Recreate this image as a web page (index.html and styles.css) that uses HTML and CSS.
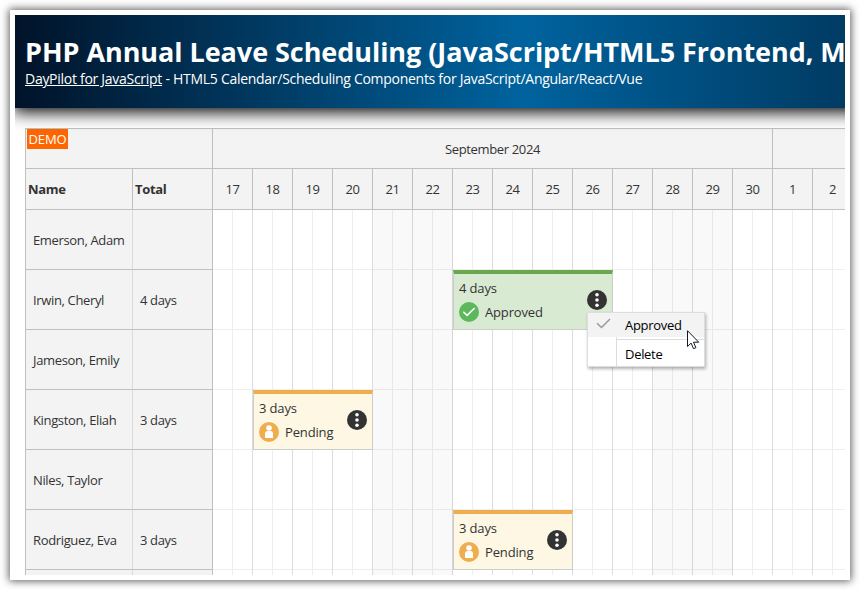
FILE: index.html
```html
<!DOCTYPE html>
<html lang="en">
  <head>
    <meta charset="UTF-8" />
    <meta name="viewport" content="width=device-width, initial-scale=1.0" />
    <title>PHP Annual Leave Scheduling</title>
    <link rel="stylesheet" href="styles.css">
  </head>
  <body>
    <div class="window">
      <div class="page">
        <header class="header">
          <h1>PHP Annual Leave Scheduling (JavaScript/HTML5 Frontend, M</h1>
          <div class="subtitle"><a href="#">DayPilot for JavaScript</a> - HTML5 Calendar/Scheduling Components for JavaScript/Angular/React/Vue</div>
        </header>

        <main class="scheduler">
          <div class="corner"><span class="demo">DEMO</span></div>
          <div class="months">
            <div class="month september">September 2024</div>
            <div class="month"></div>
          </div>
          <div class="columns"><div>Name</div><div>Total</div></div>
          <div class="days" id="days"></div>
          <div class="rows" id="rows"></div>
          <div class="grid">
            <div class="weekend first"></div>
            <div class="weekend second"></div>

            <div class="event approved">
              <div>4 days</div>
              <div class="status">
                <svg width="20" height="20" viewBox="0 0 20 20"><circle cx="10" cy="10" r="10" fill="#5cb85c" /><path d="M4.3 9.8l3.8 3.6 7.6-7.4" fill="none" stroke="#fff" stroke-width="1.5" /></svg>
                Approved
              </div>
              <svg class="dots" width="20" height="20" viewBox="0 0 20 20"><circle cx="10" cy="10" r="10" fill="#333" /><g fill="#fff"><circle cx="10" cy="4.7" r="1.8" /><circle cx="10" cy="10" r="1.8" /><circle cx="10" cy="15.3" r="1.8" /></g></svg>
            </div>

            <div class="event pending kingston">
              <div>3 days</div>
              <div class="status">
                <svg width="20" height="20" viewBox="0 0 20 20"><circle cx="10" cy="10" r="10" fill="#f0ad4e" /><circle cx="10" cy="6" r="2.8" fill="#fff" /><path d="M6 16v-4.5q0-2.5 2.5-2.5h3q2.5 0 2.5 2.5V16z" fill="#fff" /></svg>
                Pending
              </div>
              <svg class="dots" width="20" height="20" viewBox="0 0 20 20"><circle cx="10" cy="10" r="10" fill="#333" /><g fill="#fff"><circle cx="10" cy="4.7" r="1.8" /><circle cx="10" cy="10" r="1.8" /><circle cx="10" cy="15.3" r="1.8" /></g></svg>
            </div>

            <div class="event pending rodriguez">
              <div>3 days</div>
              <div class="status">
                <svg width="20" height="20" viewBox="0 0 20 20"><circle cx="10" cy="10" r="10" fill="#f0ad4e" /><circle cx="10" cy="6" r="2.8" fill="#fff" /><path d="M6 16v-4.5q0-2.5 2.5-2.5h3q2.5 0 2.5 2.5V16z" fill="#fff" /></svg>
                Pending
              </div>
              <svg class="dots" width="20" height="20" viewBox="0 0 20 20"><circle cx="10" cy="10" r="10" fill="#333" /><g fill="#fff"><circle cx="10" cy="4.7" r="1.8" /><circle cx="10" cy="10" r="1.8" /><circle cx="10" cy="15.3" r="1.8" /></g></svg>
            </div>

            <div class="menu">
              <div class="menu-item active">
                <svg width="15" height="12" viewBox="0 0 15 12"><path d="M1 5.2l4.5 4.3L14 1" fill="none" stroke="#999" stroke-width="1.5" /></svg>
                <span>Approved</span>
              </div>
              <div class="menu-line"></div>
              <div class="menu-item"><span>Delete</span></div>
            </div>
            <svg class="cursor" width="13" height="20" viewBox="0 0 13 20"><path d="M.5.7v15.8l3.6-3.4 2.4 5.6 2.4-1-2.4-5.5h5.2z" fill="#fff" stroke="#111827" /></svg>
          </div>
        </main>
      </div>
    </div>

    <script>
      const days = [17, 18, 19, 20, 21, 22, 23, 24, 25, 26, 27, 28, 29, 30, 1, 2];
      const people = [
        ["Emerson, Adam", ""],
        ["Irwin, Cheryl", "4 days"],
        ["Jameson, Emily", ""],
        ["Kingston, Eliah", "3 days"],
        ["Niles, Taylor", ""],
        ["Rodriguez, Eva", "3 days"],
        ["", ""],
      ];

      document.getElementById("days").innerHTML = days
        .map((day) => `<div>${day}</div>`)
        .join("");
      document.getElementById("rows").innerHTML = people
        .map(([name, total]) => `<div class="row"><div>${name}</div><div>${total}</div></div>`)
        .join("");
    </script>
  </body>
</html>
```
FILE: styles.css
```css
* {
  box-sizing: border-box;
}
body {
  margin: 0;
  padding: 10px;
  height: 590px;
  overflow: hidden;
  background: #fff;
  color: #333;
  font-family: "Segoe UI", "Open Sans", "Noto Sans", sans-serif;
  font-size: 13px;
  letter-spacing: -0.35px;
}
.window {
  width: 840px;
  height: 570px;
  padding: 5px;
  background: #fff;
  box-shadow: 0 0 8px 1px rgba(0, 0, 0, 0.65);
}
.page {
  height: 560px;
  overflow: hidden;
}
.header {
  position: relative;
  width: 1155px;
  height: 93px;
  padding: 18px 10px 0;
  color: #fff;
  background: linear-gradient(to right, #011329 0%, #00639e 44%, #011329 100%);
  box-shadow: 0 2px 16px 2px #000;
  white-space: nowrap;
}
.header h1 {
  margin: 0;
  font-size: 27px;
  line-height: 38px;
  letter-spacing: -0.05px;
}
.subtitle {
  font-size: 14px;
  line-height: 16px;
  letter-spacing: -0.28px;
}
.subtitle a {
  color: #fff;
}
.scheduler {
  display: grid;
  grid-template-columns: 188px 640px;
  grid-template-rows: 40px 41px 420px;
  width: 828px;
  margin: 20px 0 0 10px;
  border-top: 1px solid #c0c0c0;
}
.corner,
.columns,
.month,
.days div {
  background: #f3f3f3;
  border-right: 1px solid #c0c0c0;
  border-bottom: 1px solid #c0c0c0;
}
.corner,
.columns,
.rows {
  border-left: 1px solid #c0c0c0;
}
.corner {
  padding-left: 1px;
}
.demo {
  display: block;
  width: 41px;
  height: 20px;
  line-height: 20px;
  letter-spacing: -0.1px;
  text-align: center;
  color: #fff;
  background: #ff6600;
}
.months,
.days {
  display: flex;
}
.month {
  flex: 1;
  line-height: 41px;
  text-align: center;
}
.september {
  flex: 0 0 560px;
}
.columns {
  display: flex;
  font-weight: bold;
  line-height: 41px;
}
.columns div {
  flex: 1;
  padding-left: 2px;
}
.columns div:first-child {
  flex: 0 0 107px;
  border-right: 1px solid #c0c0c0;
}
.days div {
  width: 40px;
  line-height: 41px;
  text-align: center;
}
.row {
  display: flex;
  height: 60px;
  line-height: 61px;
  background: #f3f3f3;
  border-right: 1px solid #c0c0c0;
  border-bottom: 1px solid #c0c0c0;
}
.row div {
  flex: 1;
  padding-left: 7px;
}
.row div:first-child {
  flex: 0 0 107px;
  border-right: 1px solid #dcdcdc;
}
.grid {
  position: relative;
  background:
    repeating-linear-gradient(to right, transparent 0 39px, #dcdcdc 39px 40px),
    repeating-linear-gradient(to bottom, transparent 0 59px, #eee 59px 60px),
    repeating-linear-gradient(to right, transparent 0 19px, #eee 19px 20px, transparent 20px 40px);
}
.weekend {
  position: absolute;
  top: 0;
  width: 80px;
  height: 100%;
  background: rgba(0, 0, 0, 0.025);
}
.first {
  left: 160px;
}
.second {
  left: 440px;
}
.event {
  position: absolute;
  height: 60px;
  padding: 4px 0 0 5px;
  border: 1px solid #ccc;
  border-top: 4px solid;
  line-height: 20px;
  letter-spacing: -0.15px;
}
.approved {
  top: 60px;
  left: 240px;
  width: 160px;
  background: #d9ead3;
  border-top-color: #6aa84f;
}
.pending {
  width: 120px;
  background: #fdf7e3;
  border-top-color: #f0ad4e;
}
.kingston {
  top: 180px;
  left: 40px;
}
.rodriguez {
  top: 300px;
  left: 240px;
}
.status {
  display: flex;
  align-items: center;
  gap: 6px;
  height: 28px;
}
.dots {
  position: absolute;
  top: 16px;
  right: 5px;
}
.menu {
  position: absolute;
  top: 102px;
  left: 374px;
  width: 118px;
  height: 55px;
  color: #000;
  letter-spacing: -0.3px;
  background: linear-gradient(to right, #fff 28px, #dcdcdc 28px 29px, #fff 29px);
  border: 1px solid #ddd;
  box-shadow: 1px 2px 3px rgba(0, 0, 0, 0.3);
}
.menu-item {
  display: flex;
  height: 24px;
  padding-left: 37px;
  line-height: 25px;
}
.menu-item.active {
  gap: 14px;
  padding-left: 8px;
  background: #f3f3f3;
}
.menu-item svg {
  margin-top: 5px;
}
.menu-line {
  height: 1px;
  margin: 2px 0 2px 29px;
  background: #dcdcdc;
}
.cursor {
  position: absolute;
  top: 120px;
  left: 474px;
}
```
